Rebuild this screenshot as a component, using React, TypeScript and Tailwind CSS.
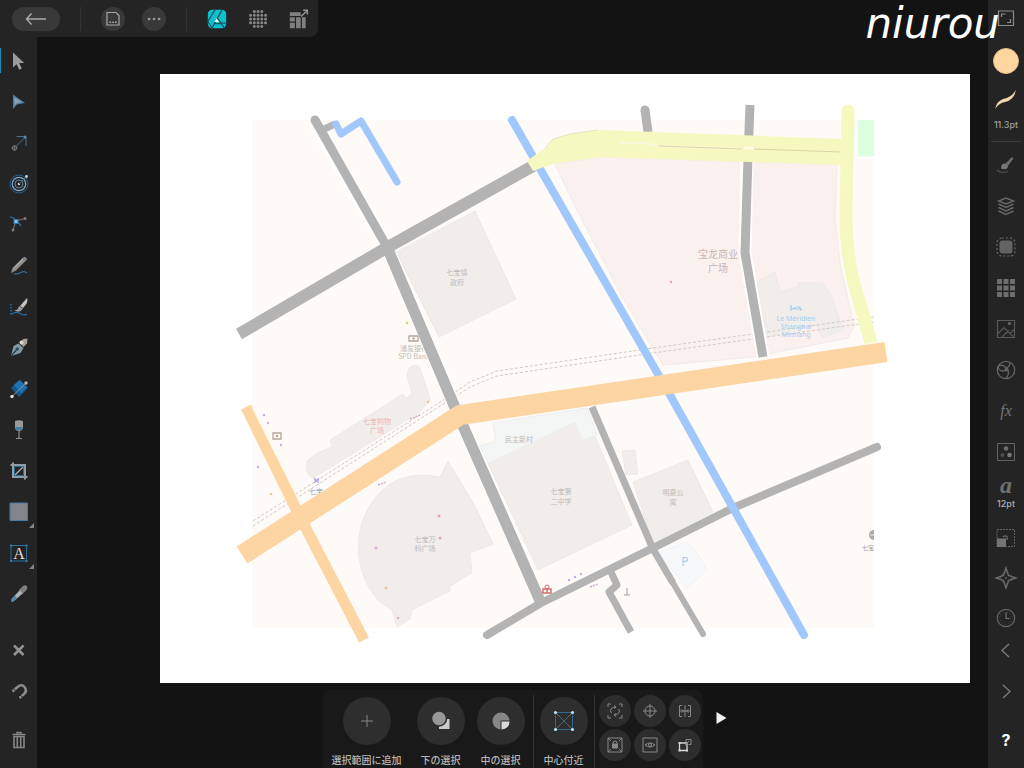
import type { ReactNode } from "react";

type Tool = { label: string; icon: ReactNode };

function Icon({ children, className = "size-6" }: { children: ReactNode; className?: string }) {
  return (
    <svg viewBox="0 0 24 24" fill="none" className={`shrink-0 ${className}`} aria-hidden="true">
      {children}
    </svg>
  );
}

const leftTools: Tool[] = [
  {
    label: "Move",
    icon: <path d="M6 3.500v15l3.600-3.300 2.600 5.600 2.600-1.200-2.600-5.500h5z" fill="#9b9b9b" />,
  },
  {
    label: "Node",
    icon: (
      <>
        <path d="M6 4.500v14.500l4-4.500 8-1.500z" fill="#4f7fa8" />
        <path d="M7.500 7.500v8l2.500-2.500 5-1z" fill="#8f9fac" />
      </>
    ),
  },
  {
    label: "Transform",
    icon: (
      <>
        <path d="M9.500 5.500h9.500v9.500M8.500 16l10-10" stroke="#45718f" />
        <circle cx="18" cy="6" r="1.500" fill="#5d86a2" />
        <circle cx="7.500" cy="17" r="2.300" stroke="#777" />
        <path d="M7.500 14v6M4.500 17h6" stroke="#777" strokeWidth=".8" />
      </>
    ),
  },
  {
    label: "Contour",
    icon: (
      <>
        <circle cx="12" cy="12" r="9" stroke="#28618c" />
        <circle cx="12" cy="12" r="6.700" stroke="#7bacd0" strokeWidth="1.200" />
        <circle cx="12" cy="12" r="4" stroke="#7d98ab" strokeWidth=".8" />
        <circle cx="12" cy="12" r="1.300" fill="#b4cfe2" />
        <path d="m12 12 7-7" stroke="#386583" />
        <circle cx="19.500" cy="4.500" r="1.400" fill="#c4d6e2" />
      </>
    ),
  },
  {
    label: "Corner",
    icon: (
      <>
        <path d="M3 4q5 0 11 9" stroke="#3076ab" strokeWidth="1.200" />
        <path d="m9 8 9-2.500M9 8l-3 9" stroke="#777" />
        <rect x="7" y="6.500" width="4" height="4" fill="#8db9da" stroke="#2f79af" />
        <circle cx="18" cy="5.500" r="1.500" fill="#857a70" />
        <circle cx="6" cy="17" r="1.500" fill="#857a70" />
      </>
    ),
  },
  {
    label: "Pencil",
    icon: (
      <>
        <path d="m4 19 1.500-5L16 3.500q3-1.500 4 2L9 16.500z" fill="#918d89" />
        <path d="m7 14.500 10-10.500" stroke="#bbb7b3" />
        <path d="M7 20q4 .5 7-1.500t6 .5" stroke="#326b98" strokeWidth="1.200" />
        <path d="m16 3.500 4 2-1.500 1.500-3.500-2.500z" fill="#637f94" />
      </>
    ),
  },
  {
    label: "Vector brush",
    icon: (
      <>
        <path d="m13 11 7-8q2 4-4 10z" fill="#c5c2bf" />
        <path d="M7 15.500q4 0 5-4.500l4 2.500q-3 5-9 2z" fill="#979ca0" />
        <path d="M4 9v11" stroke="#2c77b0" strokeDasharray="1.500 1.500" strokeWidth="1.400" />
        <path d="M5 19q4-3 8-.5t7 .5" stroke="#2c6d9e" strokeWidth="1.300" />
      </>
    ),
  },
  {
    label: "Pen",
    icon: (
      <>
        <path d="m4 20 2.500-10 5-2.500 5 4.500-3 5z" fill="#8399a6" />
        <path d="m4 20 5.500-6" stroke="#263b48" strokeWidth="1.200" />
        <circle cx="10.300" cy="13" r="1.800" fill="#374e5d" />
        <path d="m12.500 6.500 4-3.500 4-.5-.5 5-3.500 3.500z" fill="#aaa39c" />
        <circle cx="14.500" cy="6.500" r="2" fill="#d8d4d0" />
      </>
    ),
  },
  {
    label: "Fill",
    icon: (
      <>
        <path d="m4 11 8-8 9 8-9 9z" fill="#135a91" />
        <path d="m7 8 6-5 7 7-6 6z" fill="#1f74b0" />
        <path d="M5 19.500 19 6" stroke="#8294a1" />
        <circle cx="5" cy="19.500" r="1.700" fill="#e0e0e0" />
        <circle cx="19" cy="6" r="1.700" fill="#b8b8b8" />
      </>
    ),
  },
  {
    label: "Transparency",
    icon: (
      <>
        <path d="M8 3q4-1.500 8 0v7q-.5 3-4 3t-4-3z" fill="#9a9a9a" />
        <path d="M8.500 9h7v1.500q-.5 2-3.500 2t-3.500-2z" fill="#3f80aa" />
        <path d="M12 13v7M9 20.500h6" stroke="#8b8f92" strokeWidth="1.200" />
      </>
    ),
  },
  {
    label: "Crop",
    icon: (
      <>
        <path d="M6 3.500v14.500h14.500M3.500 6h14.500v14.500" stroke="#919da5" strokeWidth="2" />
        <path d="m7.500 16.500 9.500-9.500" stroke="#a8b9c4" strokeWidth="1.200" />
        <path d="M7.500 7.500v9h9v-9z" stroke="#286b94" />
      </>
    ),
  },
  {
    label: "Rectangle",
    icon: <path d="M3 3h17.500v17.500H3z" fill="#82858a" stroke="#4b7ba2" />,
  },
  {
    label: "Artistic text",
    icon: (
      <>
        <path d="M4 4.500h15.500v15.500H4z" stroke="#28719c" />
        <path d="M3 3.500h2v2H3zM18.500 3.500h2v2h-2zM3 19h2v2H3zM18.500 19h2v2h-2z" fill="#347da9" />
        <text x="12" y="17.500" textAnchor="middle" fontSize="16" fill="#e1ddd9" className="font-['Liberation_Serif',serif]">
          A
        </text>
      </>
    ),
  },
  {
    label: "Colour picker",
    icon: (
      <>
        <path d="m12 8 3.500-3.500q3-2.500 4.500 0 1 2-1.500 4.500L15 12.500l-1.500-1-1-1z" fill="#808080" />
        <path d="m4.500 20 0-3 8-8.500 3 3L7 19z" fill="#b0b4b7" />
        <path d="m4.500 20 .5-3 3-3.500 2 2.500-3 3z" fill="#4e87ad" />
      </>
    ),
  },
];

const leftActions: Tool[] = [
  { label: "Deselect", icon: <path d="m7 7.500 9.500 9.500M16.500 7.500 7 17" stroke="#929292" strokeWidth="2.600" /> },
  {
    label: "Snapping",
    icon: (
      <>
        <path d="m5.500 12.500 5-4.500q4-3.500 7 0t-.5 7L12.500 19" stroke="#8b8b8b" strokeWidth="2.600" />
        <path d="m6.500 9.500 3 3.500M12.500 15.500l3.500 3" stroke="#242424" />
      </>
    ),
  },
];

const rightPanels: Tool[] = [
  {
    label: "Brushes",
    icon: (
      <>
        <path d="m11 11 7-7 1.500 1.500-6 8z" fill="#7d7d7d" />
        <path d="M7 15.500q0-5.500 4.500-5l2.500 3q-1 4-7 2z" fill="#8c8c8c" />
        <path d="M3 17q4 4 11 1.500" stroke="#5a5a5a" strokeWidth="1.200" />
      </>
    ),
  },
  {
    label: "Layers",
    icon: (
      <path d="m12 4 7.500 3-7.500 3-7.500-3zM4.500 10l7.500 3.500 7.500-3.500M4.500 13.500 12 17l7.500-3.500M4.500 17l7.500 3.500 7.500-3.500" stroke="#777" strokeWidth="1.500" />
    ),
  },
  {
    label: "Selections",
    icon: (
      <>
        <rect x="5.500" y="5.500" width="13" height="13" rx="3" fill="#737373" />
        <rect x="3" y="3" width="18" height="18" rx="5" stroke="#7a7a7a" strokeWidth="1.200" strokeDasharray="2 2" />
      </>
    ),
  },
  {
    label: "Swatches",
    icon: (
      <path d="M3 3h5v5H3zM9.500 3h5v5h-5zM16 3h5v5h-5zM3 9.500h5v5H3zM9.500 9.500h5v5h-5zM16 9.500h5v5h-5zM3 16h5v5H3zM9.500 16h5v5h-5zM16 16h5v5h-5z" fill="#808080" />
    ),
  },
  {
    label: "Stock",
    icon: (
      <>
        <path d="M3.500 3.500h17v17h-17zM3.500 17l6.500-6.500 6 6 4-4M8 20l7-7M16 16.500l3 3" stroke="#676767" strokeWidth="1.200" />
        <circle cx="15.500" cy="6.500" r="1.700" fill="#707070" />
      </>
    ),
  },
  {
    label: "Adjustments",
    icon: (
      <>
        <circle cx="12" cy="12" r="8.700" stroke="#757575" strokeWidth="1.300" />
        <path d="M4 8.500q5-3 8 1.500 4-1 4-6M12 10q5 4 0 10.500M4 8.500q1 6 8 4" stroke="#757575" strokeWidth="1.300" />
        <circle cx="12.500" cy="11.500" r="2" fill="#757575" />
      </>
    ),
  },
  {
    label: "Effects",
    icon: (
      <text x="12" y="17" textAnchor="middle" fontSize="16" fontStyle="italic" fill="#8b8b8b" className="font-['Liberation_Serif',serif]">
        fx
      </text>
    ),
  },
  {
    label: "Styles",
    icon: (
      <>
        <path d="M3.500 3.500h17v17h-17z" stroke="#737373" />
        <circle cx="12" cy="8.500" r="2.300" fill="#808080" />
        <circle cx="8.500" cy="15" r="2.100" fill="#5a5a5a" />
        <circle cx="15.500" cy="15" r="2.300" fill="#8c8c8c" />
      </>
    ),
  },
];

const lowerPanels: Tool[] = [
  {
    label: "Transform panel",
    icon: (
      <>
        <path d="M3 3.500h17.500v17H3z" stroke="#737373" strokeDasharray="2 1" />
        <path d="M3 12.500h9v8.500H3z" fill="#8a8a8a" />
        <path d="M9 11q2-2 4-.5V14" stroke="#7b7b7b" strokeWidth="1.300" />
      </>
    ),
  },
  {
    label: "Navigator",
    icon: (
      <>
        <path d="m12 2 2.500 7.500L22 12l-7.500 2.500L12 22l-2.500-7.500L2 12l7.500-2.500z" stroke="#808080" strokeWidth="1.400" />
        <circle cx="12" cy="12" r="5.500" stroke="#666" strokeDasharray="3 2" />
        <circle cx="12" cy="12" r="1" fill="#777" />
      </>
    ),
  },
  {
    label: "History",
    icon: (
      <>
        <circle cx="12" cy="12" r="8.700" stroke="#777" strokeWidth="1.200" />
        <circle cx="12" cy="12" r="6.300" stroke="#666" strokeDasharray=".8 2.500" />
        <path d="M12 6.500V12.500h4" stroke="#808080" strokeWidth="1.200" />
      </>
    ),
  },
];

const operations: { label: string; icon: ReactNode }[] = [
  { label: "選択範囲に追加", icon: <path d="M12 6v12M6 12h12" stroke="#858585" /> },
  {
    label: "下の選択",
    icon: (
      <>
        <path d="M10 20v-3l7-7h3.500v10z" fill="#cbcbcb" />
        <circle cx="10" cy="9.500" r="7.500" fill="#989898" stroke="#2e2e2e" strokeWidth="1.500" />
      </>
    ),
  },
  {
    label: "中の選択",
    icon: (
      <>
        <circle cx="12" cy="12" r="8.500" fill="#878787" />
        <path d="M11.500 11.500H22V22H11.500z" fill="#2e2e2e" />
        <path d="M12.500 12.500h8q0 7-8 8z" fill="#d9d9d9" />
      </>
    ),
  },
  {
    label: "中心付近",
    icon: (
      <>
        <path d="M3.500 3.500h17v17h-17z" stroke="#33678c" />
        <path d="m3.500 3.500 17 17m0-17-17 17" stroke="#777" strokeWidth=".8" />
        <path d="m8 8 4 4-4 4m8-8-4 4 4 4" stroke="#33678c" strokeWidth=".7" />
        <g fill="#b9e0fb">
          <circle cx="3.500" cy="3.500" r="1.600" />
          <circle cx="20.500" cy="3.500" r="1.600" />
          <circle cx="3.500" cy="20.500" r="1.600" />
          <circle cx="20.500" cy="20.500" r="1.600" />
        </g>
      </>
    ),
  },
];

const quickActions: Tool[] = [
  {
    label: "Rotate",
    icon: (
      <>
        <path d="M5 8V5h3M16 5h3v3M19 16v3h-3M8 19H5v-3" />
        <path d="M8.500 14q-3-5 3.500-6M15.500 10q3 4-3.500 6" />
        <path d="m11 6.500 2 1.500-2 1.500M13 14.500 11 16l2 1.500" />
      </>
    ),
  },
  {
    label: "Show centre",
    icon: (
      <>
        <circle cx="12" cy="12" r="5" />
        <path d="M12 5v14M5 12h14" />
      </>
    ),
  },
  {
    label: "Align",
    icon: (
      <>
        <path d="M9 6.500H6.500v11H9M15 6.500h2.500v11H15" />
        <path d="M12 6v12M6.500 12h11M8.500 10.500 10.500 12l-2 1.500M15.500 10.500 13.500 12l2 1.500" />
      </>
    ),
  },
  {
    label: "Lock",
    icon: (
      <>
        <path d="M5 5h14v14H5z" />
        <path d="m5 5 3 3M19 5l-3 3M5 19l3-3M19 19l-3-3M10 11V9q2-2 4 0v2" />
        <path d="M9.500 11h5v4h-5z" fill="#888" />
      </>
    ),
  },
  {
    label: "Visibility",
    icon: (
      <>
        <path d="M5 5h14v14H5zM7 12q5-4 10 0-5 4-10 0z" />
        <circle cx="12" cy="12" r="1.500" />
      </>
    ),
  },
  {
    label: "Duplicate",
    icon: (
      <>
        <path d="M6.500 10h7.500v7.500H6.500z" stroke="#d7d7d7" strokeWidth="1.300" />
        <path d="M5.500 9h2v2h-2zM13 16.500h2v2h-2zM5.500 16.500h2v2h-2z" fill="#d7d7d7" stroke="none" />
        <path d="m12 12 4-4M13 9V6.500h5v5h-2.500" />
      </>
    ),
  },
];

function ToolButton({ tool, className = "h-[41px]" }: { tool: Tool; className?: string }) {
  return (
    <button type="button" aria-label={tool.label} className={`flex w-full shrink-0 items-center justify-center ${className}`}>
      <Icon>{tool.icon}</Icon>
    </button>
  );
}

function TopBar() {
  return (
    <header className="flex h-[37px] shrink-0 items-center self-start rounded-br-lg bg-[#242424] pr-[9px] pl-3">
      <button type="button" aria-label="Back" className="flex h-6 w-12 items-center justify-center rounded-full bg-[#393939]">
        <Icon>
          <path d="M22 12H3M7.500 6.500 2.500 12l5 5.500" stroke="#a9a9a9" strokeWidth="1.500" />
        </Icon>
      </button>
      <span className="ml-5 h-6 w-px bg-[#333]" />
      <button type="button" aria-label="Document" className="ml-5 flex size-6 items-center justify-center rounded-full bg-[#393939]">
        <Icon>
          <path d="M6 5.500h9l3 3v9.500H6z" stroke="#a8a8a8" strokeWidth="1.200" />
          <path d="M8.500 14.500h1.600v1.600H8.500zM11.300 14.500h1.600v1.600h-1.600zM14 14.500h1.600v1.600H14z" fill="#a8a8a8" />
        </Icon>
      </button>
      <button type="button" aria-label="Edit menu" className="ml-[17px] flex size-6 items-center justify-center rounded-full bg-[#393939]">
        <Icon>
          <path d="M7 12h.1M12 12h.1M17 12h.1" stroke="#9b9b9b" strokeWidth="2.600" strokeLinecap="round" />
        </Icon>
      </button>
      <span className="ml-5 h-6 w-px bg-[#333]" />
      <nav className="ml-5 flex gap-[21px]">
        <button type="button" aria-label="Vector persona">
          <Icon className="size-5">
            <rect x="1" y="1" width="22" height="22" rx="5" fill="#10bfd0" />
            <path d="M1 15 9.500 1M6 23 18 1M1 15l5 8M12.500 11 17 17h6M8 17.500h9l4 5.500" stroke="#12575f" strokeWidth="1.500" />
            <path d="m9 15.500 2.500-4.500 3 4.500z" fill="#fff" />
          </Icon>
        </button>
        <button type="button" aria-label="Pixel persona">
          <Icon className="size-5">
            <g stroke="#858585" strokeWidth="3.600" strokeDasharray=".1 4.400" strokeLinecap="round">
              <path d="M7.500 3h9.500M3 7.500h18.500M3 12h18.500M3 16.500h18.500M7.500 21h9.500" />
            </g>
          </Icon>
        </button>
        <button type="button" aria-label="Export persona">
          <Icon className="size-5">
            <path d="M1 4h13v4.500H1zM1 10h6v5H1zM1 16.500h6V23H1zM8.500 10H14v13H8.500zM15.500 10H20v13h-4.500z" fill="#808080" />
            <path d="m14.500 9 7-7M17 1.500h5v5" stroke="#929292" strokeWidth="1.800" />
          </Icon>
        </button>
      </nav>
    </header>
  );
}

function LeftTools() {
  return (
    <aside className="flex w-[37px] shrink-0 flex-col bg-[#242424] pt-[3px]">
      {leftTools.map((tool, index) => (
        <div key={tool.label} className="relative">
          {index === 0 && <span className="absolute inset-y-2 left-0 w-px bg-[#2786b8]" />}
          <ToolButton tool={tool} />
          {(index === 11 || index === 12) && (
            <svg viewBox="0 0 5 5" className="absolute right-[3px] bottom-1 size-[5px]" aria-hidden="true">
              <path d="M5 0v5H0z" fill="#858585" />
            </svg>
          )}
        </div>
      ))}
      <div className="mt-[15px]">
        {leftActions.map((tool) => (
          <ToolButton key={tool.label} tool={tool} />
        ))}
      </div>
      <button type="button" aria-label="Delete" className="mt-2 flex h-[41px] items-center justify-center">
        <Icon>
          <path d="M5.500 6.500h13M10 6V4.500h4V6" stroke="#858585" strokeWidth="1.400" />
          <path d="M7 8.500h10v11H7zM10.300 9v10M13.700 9v10" stroke="#858585" strokeWidth="1.600" />
        </Icon>
      </button>
    </aside>
  );
}

function RightPanels() {
  return (
    <aside className="flex w-9 shrink-0 flex-col items-center bg-[#242424]">
      <button type="button" aria-label="Full screen" className="flex h-9 w-full items-center justify-center">
        <Icon>
          <path d="M4.500 5h15v14.500h-15z" stroke="#8b8b8b" strokeWidth="1.200" />
          <path d="M7.500 11V8h4M16.500 13v3.500H13" stroke="#8b8b8b" strokeWidth="1.200" />
        </Icon>
      </button>
      <button type="button" aria-label="Colour" className="mt-3 size-[26px] rounded-full border border-[#e7bd8a] bg-[#ffd5a0]" />
      <button type="button" className="mt-[14px] flex flex-col items-center text-[9px] leading-3 font-medium text-[#a0a0a0]">
        <Icon>
          <path d="M1 21q2-8 8-10 8-1 13-9-2 10-11 12-6 1-10 7z" fill="#f3d5ae" />
        </Icon>
        <span className="mt-[7px]">11.3pt</span>
      </button>
      <span className="mt-[10px] h-px w-[30px] shrink-0 bg-[#3b3b3b]" />
      <div className="mt-[2px] w-full opacity-80">
        {rightPanels.map((tool) => (
          <ToolButton key={tool.label} tool={tool} />
        ))}
      </div>
      <button type="button" className="flex h-[46px] w-full flex-col items-center pb-2">
        <span className="font-['Liberation_Serif',serif] text-[24px] leading-[26px] font-bold text-[#707070] italic">a</span>
        <span className="text-[9px] leading-3 font-medium text-[#b0b0b0]">12pt</span>
      </button>
      <div className="w-full opacity-80">
        {lowerPanels.map((tool) => (
          <ToolButton key={tool.label} tool={tool} className="h-10" />
        ))}
      </div>
      <button type="button" aria-label="Previous" className="flex h-6 w-full items-center justify-center">
        <Icon>
          <path d="m15 6-7 6.500 7 6.500" stroke="#777" strokeWidth="1.500" />
        </Icon>
      </button>
      <button type="button" aria-label="Next" className="mt-2 flex h-[41px] w-full items-center justify-center">
        <Icon>
          <path d="m9 6 7 6.500L9 19" stroke="#777" strokeWidth="1.500" />
        </Icon>
      </button>
      <button type="button" className="mt-2 h-[41px] w-full text-base font-bold text-white">
        ?
      </button>
    </aside>
  );
}

function MapLabels() {
  return (
    <g fontSize="7" textAnchor="middle" className="font-['Noto_Sans_CJK_SC',sans-serif]">
      <g fill="#bdbab8">
        <text x="457" y="275">七宝镇</text>
        <text x="457" y="285">政府</text>
        <text x="425" y="542">七宝万</text>
        <text x="425" y="551">科广场</text>
        <text x="561" y="494">七宝第</text>
        <text x="561" y="504">二中学</text>
        <text x="519" y="442">民主新村</text>
        <text x="673" y="495">明泉公</text>
        <text x="673" y="505">寓</text>
      </g>
      <g fill="#c9b4b4" fontSize="10">
        <text x="718" y="258">宝龙商业</text>
        <text x="718" y="272">广场</text>
      </g>
      <g fill="#f2b3b1">
        <text x="377" y="424">七宝购物</text>
        <text x="377" y="433">广场</text>
      </g>
      <g fill="#c4bcb1">
        <text x="414" y="351">浦发银行</text>
        <text x="414" y="359">SPD Bank</text>
      </g>
      <g fill="#a5cdf5" className="font-['Noto_Sans',sans-serif]">
        <text x="796" y="321">Le Méridien</text>
        <text x="796" y="329">Shanghai</text>
        <text x="796" y="337">Minhang</text>
        <text x="685" y="566" fontSize="12">
          P
        </text>
      </g>
      <text x="868" y="550" fill="#9b9baa" fontSize="6">七宝</text>
      <text x="316" y="494" fill="#93a6ce">七宝</text>
    </g>
  );
}

function MapCanvas() {
  return (
    <svg viewBox="160 74 810 609" className="h-full w-full" role="img" aria-label="Map" fill="none">
      <path d="M160 74h810v609H160z" fill="#fff" />
      <path d="M252 120h622v508H252z" fill="#fdfaf7" />

      {/* districts and buildings */}
      <path d="M555 164 600 157 837 165 835 217 840 263 854 326 848 338 753 357 663 365 620 293 577 210z" fill="#faf1ef" stroke="#f2ebe5" />
      <path d="M858 120h16v36h-16z" fill="#dffde1" />
      <path d="M852 158h22" stroke="#fff" strokeWidth="2" />
      <g fill="#f0edeb" stroke="#e8e5e2" strokeWidth=".7">
        <path d="m757 282 18-10 5 20 18-5v-4h24l10 14 11 33-21 8-5-13-50 12z" />
        <path d="m396 252 79-41 41 88-77 38z" />
        <path d="m448 461 27 45 18 38-23 9 2 20-22 13v5l-38 19-2 9-13 8-5-17-12-8C347 568 351 505 397 480q21-8 43-3z" />
        <path d="m488 463 87-41 7 18 13-4 37 89-94 45z" />
        <path d="m622 451 13-1 3 24-12 1zM633 482l55-22 25 52-60 31z" />
        <path d="M407 376q0-10 9-11 4 1 5 6l7 21 2 8-10 12-97 60-10 6q-9-4-6-17l12-9 13-5-2-7 73-46 3 4 6-4z" />
      </g>
      <path d="m493 423 3 18-17 5 9 17 87-41 7 18 15-5-10-27z" fill="#f4f5f5" stroke="#edf0f0" />
      <path d="m658 553 29-11 8 8 12 20-20 18z" fill="#f7f8fa" stroke="#f0f2f4" />

      {/* metro line */}
      <g stroke="#d0cac6" strokeDasharray="3 2">
        <path d="M253 521 445 399 470 382 497 371 653 348 753 334 873 317" />
        <path d="M253 526 445 403 470 387 497 376 653 353 753 339 873 322" />
      </g>

      <MapLabels />

      {/* roads */}
      <g stroke="#fff" strokeWidth="13">
        <path d="M314 122 387 247 456 410 541 602M747 160 745 253 763 357M848 163 846 217 848 257 870 342" />
      </g>
      <g stroke="#b3b3b3" strokeLinejoin="round">
        <path d="M315 120v.1" strokeWidth="9" strokeLinecap="round" />
        <path d="M315 120 387 247" strokeWidth="9" />
        <path d="m387 247 69 163 85 193" strokeWidth="11" />
        <path d="m320 131 15-7" strokeWidth="7" />
        <path d="m239 334 149-87 145-81" strokeWidth="12" />
        <path d="m487 635 54-32 112-55 80-40 144-61" strokeWidth="8" strokeLinecap="round" />
        <path d="m592 407 61 142 20 34" strokeWidth="7" />
        <path d="m673 583 30 51" strokeWidth="6" strokeLinecap="round" />
        <path d="m611 572 6 13-8 7 22 40" strokeWidth="7" />
        <path d="m645 110 3 22" strokeWidth="9" />
        <path d="M645 110v.1" strokeWidth="9" strokeLinecap="round" />
        <path d="m750 105-2 52-3 96 18 104" strokeWidth="9" />
      </g>
      <g stroke="#a0c8fc" strokeLinecap="round" strokeLinejoin="round">
        <path d="m512 120 158 275 134 240" strokeWidth="8" />
        <path d="m336 124 5 10 20-13 36 61" strokeWidth="7" />
      </g>
      <path d="m527 161 18-13 8-9 17-5 28-4 244 9v26l-242-8-48 7-19 7z" fill="#f6f9bf" />
      <path d="m545 148 8-9 17-5 28-4" stroke="#dbd9bc" strokeWidth=".7" />
      <path d="M620 143h26l12 3 84 3" stroke="#f9f8dd" strokeWidth="2" />
      <path d="m658 146 84 3M754 149l88 3" stroke="#d8d4a8" strokeWidth="1.200" />
      <path d="M744 148h9" stroke="#fffde8" strokeWidth="3" />
      <path d="M848 111 846 217q0 33 7 62l18 64" stroke="#f6f9bf" strokeWidth="13" />
      <path d="M848 111v.1" stroke="#f6f9bf" strokeWidth="13" strokeLinecap="round" />
      <g stroke="#fcd5a2">
        <path d="m242 555 218-140 426-63" strokeWidth="20" />
        <path d="m246 407 53 108 65 125" strokeWidth="11" />
      </g>
      <path d="m252 408 46 91" stroke="#fff0d9" />

      {/* points of interest */}
      <g fill="#c7a9e7">
        <circle cx="264" cy="415" r="1.200" />
        <circle cx="268" cy="423" r="1.200" />
        <circle cx="281" cy="445" r="1.200" />
        <circle cx="258" cy="467" r="1.200" />
        <circle cx="376" cy="548" r="1.500" fill="#e7a8ea" />
        <circle cx="439" cy="516" r="1.500" fill="#e3a2ae" />
        <circle cx="440" cy="538" r="1.500" fill="#e6a7cb" />
        <circle cx="386" cy="588" r="1.500" fill="#e7c69c" />
        <circle cx="398" cy="618" r="1.300" fill="#d9b6ae" />
        <circle cx="271" cy="494" r="1.300" fill="#e7c69c" />
        <circle cx="428" cy="402" r="1.300" fill="#e7c69c" />
        <circle cx="407" cy="323" r="1.300" fill="#ced77a" />
        <circle cx="671" cy="282" r="1.200" fill="#dda5ad" />
        <circle cx="569" cy="580" r="1.200" />
        <circle cx="575" cy="577" r="1.200" />
        <circle cx="581" cy="574" r="1.200" />
        <path d="m590 587 8-3M378 485l8-3M410 419l10-4" stroke="#d6aad2" strokeWidth="1.500" strokeDasharray="2 1" />
      </g>
      <path d="M273 433h8v6h-8zM409 336h9v5h-9z" stroke="#b6a795" strokeWidth="1.300" />
      <circle cx="277" cy="436" r="1.200" fill="#b6a795" />
      <circle cx="413.500" cy="338.500" r="1.200" fill="#b6a795" />
      <path d="m314 478 5 5m0-5-5 5m0-3h5" stroke="#b5ace7" strokeWidth="1.300" />
      <path d="M791 305v6m0-2h10v2m-8-3h3m0-1h4v2" stroke="#a1cdec" strokeWidth="1.200" />
      <circle cx="547" cy="587" r="2" stroke="#d66d6d" />
      <path d="M543 589h8v4h-8zM547 588v5" stroke="#d66d6d" strokeWidth="1.500" />
      <path d="M627 588v7m-3 0h6" stroke="#aaa1a1" />
      <path d="M874 530a5 5 0 0 0 0 10z" fill="#aaa" />
      <path d="M870 535h4" stroke="#eee" />
    </svg>
  );
}

function OperationButton({ label, icon }: { label: string; icon: ReactNode }) {
  return (
    <button type="button" className="flex min-w-12 flex-col items-center text-[10px] leading-[14px] font-medium whitespace-nowrap text-[#b5b5b5]">
      <span className="flex size-12 items-center justify-center rounded-full bg-[#2e2e2e]">
        <Icon>{icon}</Icon>
      </span>
      <span className="mt-2">{label}</span>
    </button>
  );
}

function ContextToolbar() {
  return (
    <footer className="grid grid-cols-[1fr_auto_1fr]">
      <div className="col-start-2 flex h-[78px] items-start rounded-t-lg bg-[#191919] pr-[2px] pl-[9px]">
        <div className="mr-2 flex gap-3 pt-[7px]">
          <div className="pr-[3px]">
            <OperationButton {...operations[0]} />
          </div>
          <OperationButton {...operations[1]} />
          <OperationButton {...operations[2]} />
        </div>
        <div className="mt-[5px] flex h-[73px] border-x border-[#333] px-[6px] pt-[2px]">
          <OperationButton {...operations[3]} />
        </div>
        <div className="ml-1 grid grid-cols-3 gap-x-[3px] gap-y-[2px] pt-[5px]">
          {quickActions.map((tool) => (
            <button key={tool.label} type="button" aria-label={tool.label} className="flex size-8 items-center justify-center rounded-full bg-[#2d2d2d]">
              <Icon>
                <g stroke="#888">{tool.icon}</g>
              </Icon>
            </button>
          ))}
        </div>
      </div>
      <button type="button" aria-label="More" className="mt-4 ml-3 size-6">
        <Icon>
          <path d="M1.500 6v12l10-6z" fill="#f2f2f2" />
        </Icon>
      </button>
    </footer>
  );
}

export default function App() {
  return (
    <div className="relative flex h-screen overflow-hidden bg-[#131313] font-['Inter','Noto_Sans_CJK_JP',sans-serif]">
      <div className="flex min-w-0 flex-1 flex-col">
        <TopBar />
        <div className="flex min-h-0 flex-1">
          <LeftTools />
          <main className="flex min-w-0 flex-1 flex-col">
            <div className="min-h-0 flex-1 pt-[37px] pr-[18px] pb-[7px] pl-[123px]">
              <MapCanvas />
            </div>
            <ContextToolbar />
          </main>
        </div>
      </div>
      <RightPanels />
      <p className="pointer-events-none absolute top-0 right-6 font-['DejaVu_Sans',sans-serif] text-[42px] leading-[48px] text-white italic">
        niurou
      </p>
    </div>
  );
}
